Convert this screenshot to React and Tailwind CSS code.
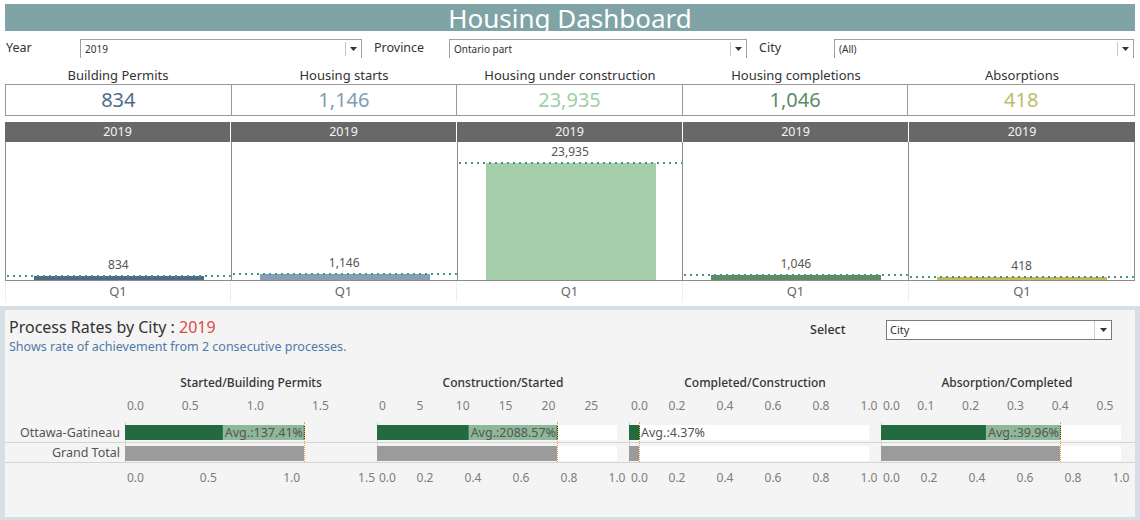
import React from 'react';

const kpis = [
  { title: 'Building Permits', label: '834', value: 834, color: 'text-[#4f6d88]', bar: 'bg-[#4d6a86]' },
  { title: 'Housing starts', label: '1,146', value: 1146, color: 'text-[#7e9cb6]', bar: 'bg-[#879fb4]' },
  { title: 'Housing under construction', label: '23,935', value: 23935, color: 'text-[#9fcfa6]', bar: 'bg-[#a4cfaa]' },
  { title: 'Housing completions', label: '1,046', value: 1046, color: 'text-[#5b8b63]', bar: 'bg-[#5f8b67]' },
  { title: 'Absorptions', label: '418', value: 418, color: 'text-[#bcbd6b]', bar: 'bg-[#c6b95b]' },
];

const MAX = 23935;
const PLOT = 117;

function Caret() {
  return (
    <svg width="7" height="4" viewBox="0 0 7 4">
      <path d="M0 0h7L3.5 4z" fill="#333" />
    </svg>
  );
}

function FilterBox({ text, className }) {
  return (
    <div className={'h-[19px] bg-white border-t border-l border-r border-[#a0a0a0] flex ' + className}>
      <div className="flex-1 pl-[4px] text-[10px] leading-[18px] text-[#333]">{text}</div>
      <div className="w-[16px] border-l border-[#c8c8c8] my-[2px] flex items-center justify-center">
        <Caret />
      </div>
    </div>
  );
}

function Dotted() {
  return (
    <svg className="block w-full h-[2px]" preserveAspectRatio="none">
      <line x1="1" y1="1" x2="100%" y2="1" stroke="#3f978c" strokeWidth="2" strokeDasharray="2 4" />
    </svg>
  );
}

const frac = [['0.0', 0], ['0.2', 0.2], ['0.4', 0.4], ['0.6', 0.6], ['0.8', 0.8], ['1.0', 1]];

const charts = [
  {
    title: 'Started/Building Permits',
    white: false,
    top: { scale: 130.3, ticks: [['0.0', 0], ['0.5', 0.5], ['1.0', 1], ['1.5', 1.5]] },
    bottom: { scale: 166.67, ticks: [['0.0', 0], ['0.5', 0.5], ['1.0', 1], ['1.5', 1.5]], endRight: true },
    bar: 179,
    avg: 'Avg.:137.41%',
    inside: true,
  },
  {
    title: 'Construction/Started',
    white: true,
    top: { scale: 8.57, ticks: [['0', 0], ['5', 5], ['10', 10], ['15', 15], ['20', 20], ['25', 25]] },
    bottom: { scale: 240, ticks: frac },
    bar: 180,
    avg: 'Avg.:2088.57%',
    inside: true,
  },
  {
    title: 'Completed/Construction',
    white: true,
    top: { scale: 240, ticks: frac },
    bottom: { scale: 240, ticks: frac },
    bar: 10,
    avg: 'Avg.:4.37%',
    inside: false,
  },
  {
    title: 'Absorption/Completed',
    white: true,
    top: { scale: 448, ticks: [['0.0', 0], ['0.1', 0.1], ['0.2', 0.2], ['0.3', 0.3], ['0.4', 0.4], ['0.5', 0.5]] },
    bottom: { scale: 240, ticks: frac },
    bar: 179,
    avg: 'Avg.:39.96%',
    inside: true,
  },
];

function Axis({ axis }) {
  const n = axis.ticks.length;
  return (
    <div className="relative h-[16px] w-[252px] text-[12px] leading-[16px] text-[#7c7c7c]">
      {axis.ticks.map(([l, v], i) => {
        if (i === 0) {
          return (
            <span key={i} className="absolute left-[2px] top-0">{l}</span>
          );
        }
        const right = axis.endRight && i === n - 1;
        return (
          <span
            key={i}
            className={'absolute top-0 whitespace-nowrap ' + (right ? '-translate-x-full' : '-translate-x-1/2')}
            style={{ left: v * axis.scale }}
          >
            {l}
          </span>
        );
      })}
    </div>
  );
}

function DataCell({ c, total }) {
  return (
    <div className="relative w-[252px] h-full">
      <div className="absolute left-0 top-0 bottom-0 border-l border-[#d2d2d2]" />
      {c.white && <div className="absolute left-0 top-[3px] h-[15px] w-[240px] bg-white" />}
      <div
        className={'absolute left-0 top-[3px] h-[15px] ' + (total ? 'bg-[#9b9b9b]' : 'bg-[#236a3e]')}
        style={{ width: c.bar }}
      />
      {!total && c.inside && (
        <div
          className="absolute top-[3px] h-[15px] bg-[#8fb79a] pl-[2px] pr-[1px] text-[12.5px] leading-[15px] text-[#555] whitespace-nowrap -translate-x-full"
          style={{ left: c.bar }}
        >
          {c.avg}
        </div>
      )}
      {!total && !c.inside && (
        <div
          className="absolute top-[3px] h-[15px] pl-[2px] text-[12.5px] leading-[15px] text-[#555] whitespace-nowrap"
          style={{ left: c.bar }}
        >
          {c.avg}
        </div>
      )}
      {!total && <div className="absolute top-[3px] h-[15px] w-px bg-[#1f5a35]" style={{ left: c.bar }} />}
      <div
        className="absolute top-0 bottom-0 border-l border-dotted border-[#f5a33e]"
        style={{ left: c.bar }}
      />
    </div>
  );
}

export default function App() {
  return (
    <div className="w-[1140px] h-[520px] bg-white overflow-hidden font-['Noto_Sans',sans-serif]">
      <div className="px-[5px] pt-[4px]">
        <div className="h-[27px] bg-[#80a3a6] flex items-center justify-center text-white text-[26px] leading-none">
          Housing Dashboard
        </div>

        <div className="mt-[8px] flex items-start text-[12.5px] text-[#333]">
          <div className="w-[75px] pl-[1px] leading-[18px]">Year</div>
          <FilterBox text="2019" className="w-[282px]" />
          <div className="w-[75px] ml-[12px] leading-[18px]">Province</div>
          <FilterBox text="Ontario part" className="w-[298px]" />
          <div className="w-[75px] ml-[12px] leading-[18px]">City</div>
          <FilterBox text="(All)" className="w-[300px]" />
        </div>

        <div className="mt-[8px] grid grid-cols-5">
          {kpis.map((k) => (
            <div key={k.title} className="h-[18px] text-center text-[13px] leading-[18px] text-[#333]">
              {k.title}
            </div>
          ))}
        </div>

        <div className="grid grid-cols-5 border border-[#9a9a9a] h-[32px]">
          {kpis.map((k, i) => (
            <div
              key={k.title}
              className={'flex items-center justify-center text-[20px] leading-none ' + k.color + (i < 4 ? ' border-r border-[#9a9a9a]' : '')}
            >
              {k.label}
            </div>
          ))}
        </div>

        <div className="mt-[6px] grid grid-cols-5">
          {kpis.map((k, i) => (
            <div
              key={k.title}
              className={'h-[20px] bg-[#686868] text-[#f4f4f4] text-[12.5px] leading-[20px] text-center' + (i < 4 ? ' border-r border-white' : '')}
            >
              2019
            </div>
          ))}
        </div>

        <div className="grid grid-cols-5 border-l border-[#8c8c8c]">
          {kpis.map((k) => {
            const h = Math.max(3, Math.round((k.value / MAX) * PLOT));
            return (
              <div key={k.title} className="relative h-[139px] border-r border-b border-[#8c8c8c]">
                <div className="absolute left-0 right-0 text-center text-[12px] leading-[14px] text-[#555]" style={{ bottom: h + 4 }}>
                  {k.label}
                </div>
                <div className={'absolute left-[28px] w-[170px] bottom-0 ' + k.bar} style={{ height: h }} />
                <div className="absolute left-0 right-0" style={{ bottom: h - 1 }}>
                  <Dotted />
                </div>
              </div>
            );
          })}
        </div>

        <div className="grid grid-cols-5">
          {kpis.map((k, i) => (
            <div
              key={k.title}
              className={'h-[21px] text-center text-[13px] leading-[21px] text-[#666]' + (i < 4 ? ' border-r border-[#eeeeee]' : '') + (i === 0 ? ' border-l border-[#eeeeee]' : '')}
            >
              Q1
            </div>
          ))}
        </div>
      </div>

      <div className="mt-[4px] bg-[#d6dfe6] px-[5px] pt-[4px] pb-[3px]">
        <div className="bg-[#f4f4f4] h-[207px]">
          <div className="flex justify-between">
            <div className="pl-[4px] pt-[7px]">
              <div className="text-[16px] leading-[20px] text-[#333]">
                Process Rates by City : <span className="text-[#e0474c]">2019</span>
              </div>
              <div className="mt-[2px] text-[12.5px] leading-[16px] text-[#4e79a7]">
                Shows rate of achievement from 2 consecutive processes.
              </div>
            </div>
            <div className="flex items-center pt-[10px] pr-[23px] h-fit">
              <div className="w-[76px] text-[12.5px] font-medium text-[#333]">Select</div>
              <div className="w-[226px] h-[20px] bg-white border border-[#7a7a7a] flex">
                <div className="flex-1 pl-[3px] text-[11px] leading-[18px] text-[#333]">City</div>
                <div className="w-[17px] border-l border-[#cfcfcf] flex items-center justify-center">
                  <Caret />
                </div>
              </div>
            </div>
          </div>

          <div className="mt-[19px] flex">
            <div className="w-[120px]" />
            {charts.map((c) => (
              <div key={c.title} className="w-[252px] h-[18px] text-center text-[12px] leading-[18px] font-medium text-[#333]">
                {c.title}
              </div>
            ))}
          </div>

          <div className="mt-[6px] flex">
            <div className="w-[120px]" />
            {charts.map((c) => (
              <Axis key={c.title} axis={c.top} />
            ))}
          </div>

          <div className="mt-[8px] flex h-[21px] border-b border-[#d4d4d4]">
            <div className="w-[120px] pr-[5px] text-right text-[12.5px] leading-[21px] text-[#555]">Ottawa-Gatineau</div>
            {charts.map((c) => (
              <DataCell key={c.title} c={c} total={false} />
            ))}
          </div>
          <div className="flex h-[20px] border-b border-[#d4d4d4]">
            <div className="w-[120px] pr-[5px] text-right text-[12.5px] leading-[20px] text-[#555]">Grand Total</div>
            {charts.map((c) => (
              <DataCell key={c.title} c={c} total={true} />
            ))}
          </div>

          <div className="mt-[7px] flex">
            <div className="w-[120px]" />
            {charts.map((c) => (
              <Axis key={c.title} axis={c.bottom} />
            ))}
          </div>
        </div>
      </div>
    </div>
  );
}
